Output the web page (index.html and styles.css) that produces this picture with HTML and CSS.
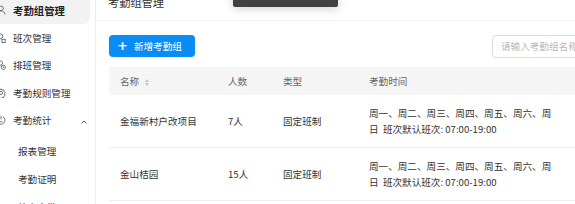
FILE: index.html
```html
<!DOCTYPE html>
<html lang="zh-CN">
<head>
<meta charset="utf-8">
<title>考勤组管理</title>
<link rel="stylesheet" href="styles.css">
</head>
<body>
<aside class="sidebar">
  <ul class="menu">
    <li class="item active">
      <svg class="icon" viewBox="0 0 10 10"><circle cx="5" cy="3.3" r="2.3"/><path d="M1 9.5c0-2.4 1.8-3.6 4-3.6s4 1.2 4 3.6"/></svg>
      <span>考勤组管理</span>
    </li>
    <li class="item">
      <svg class="icon" viewBox="0 0 10 10"><circle cx="4.5" cy="3.3" r="2.3"/><path d="M0.8 9.5c0-2.4 1.7-3.6 3.7-3.6"/><rect x="6" y="6.3" width="3.2" height="3.2"/></svg>
      <span>班次管理</span>
    </li>
    <li class="item">
      <svg class="icon" viewBox="0 0 10 10"><circle cx="4.3" cy="3" r="2.2"/><path d="M0.8 9.3c0-2.2 1.5-3.4 3.5-3.4"/><circle cx="7.3" cy="7.3" r="2.1"/><path d="M7.3 6.3v1.1h0.9"/></svg>
      <span>排班管理</span>
    </li>
    <li class="item">
      <svg class="icon" viewBox="0 0 10 10"><circle cx="5" cy="5" r="1.6"/><path d="M5 0.8l1 1.3 1.6-.3.3 1.6 1.3 1-.8 1.4.8 1.4-1.3 1-.3 1.6-1.6-.3-1 1.3-1-1.3-1.6.3-.3-1.6-1.3-1 .8-1.4-.8-1.4 1.3-1 .3-1.6 1.6.3z"/></svg>
      <span>考勤规则管理</span>
    </li>
    <li class="item open">
      <svg class="icon" viewBox="0 0 10 10"><path d="M3 1.8a4 4 0 1 0 4 0"/><path d="M5 0.8v3.6"/><path d="M3.3 6.8h3.4"/></svg>
      <span>考勤统计</span>
      <svg class="arrow" viewBox="0 0 6 4"><path d="M0.7 3.3L3 1l2.3 2.3"/></svg>
    </li>
    <li class="sub">
      <ul class="submenu">
        <li class="subitem">报表管理</li>
        <li class="subitem">考勤证明</li>
        <li class="subitem">补卡审批</li>
      </ul>
    </li>
  </ul>
</aside>
<main class="main">
  <div class="toast"></div>
  <header class="header"><h1 class="title">考勤组管理</h1></header>
  <section class="content">
    <div class="toolbar">
      <button class="btn-primary"><span class="plus">+</span>新增考勤组</button>
      <div class="search">请输入考勤组名称</div>
    </div>
    <div class="table">
      <div class="row head">
        <div class="cell c1">名称<span class="sorter"><i class="up"></i><i class="down"></i></span></div>
        <div class="cell c2">人数</div>
        <div class="cell c3">类型</div>
        <div class="cell c4">考勤时间</div>
      </div>
      <div class="row">
        <div class="cell c1">金福新村户改项目</div>
        <div class="cell c2">7人</div>
        <div class="cell c3">固定班制</div>
        <div class="cell c4">周一、周二、周三、周四、周五、周六、周日&nbsp;&nbsp;班次默认班次: 07:00-19:00</div>
      </div>
      <div class="row">
        <div class="cell c1">金山桔园</div>
        <div class="cell c2">15人</div>
        <div class="cell c3">固定班制</div>
        <div class="cell c4">周一、周二、周三、周四、周五、周六、周日&nbsp;&nbsp;班次默认班次: 07:00-19:00</div>
      </div>
    </div>
  </section>
</main>
</body>
</html>
```

FILE: styles.css
```css
* { box-sizing: border-box; }
html, body { margin: 0; padding: 0; }
body {
  width: 575px;
  height: 204px;
  overflow: hidden;
  display: flex;
  background: #fff;
  font-family: "Noto Sans CJK SC", "Noto Sans", sans-serif;
  font-size: 9.6px;
  color: #333;
}
.sidebar {
  width: 96px;
  flex-shrink: 0;
  border-right: 1px solid #eeeeee;
  height: 100%;
}
.menu, .submenu { list-style: none; margin: 0; padding: 0; }
.menu { margin-top: -4px; }
.item {
  height: 27.5px;
  display: flex;
  align-items: center;
  gap: 7px;
  color: #333;
  margin-right: 5px;
}
.item .icon {
  width: 10px;
  height: 10px;
  margin-left: -4px;
  fill: none;
  stroke: #666;
  stroke-width: 0.9;
  flex-shrink: 0;
}
.item.active {
  background: #f2f2f2;
  border-radius: 0 6px 6px 0;
  font-weight: 700;
  font-size: 10.4px;
  height: 28px;
  color: #222;
}
.arrow {
  width: 6px;
  height: 4px;
  margin-left: auto;
  margin-right: 3px;
  margin-top: 3px;
  fill: none;
  stroke: #555;
  stroke-width: 1;
}
.submenu { padding-top: 3px; }
.subitem {
  height: 28px;
  display: flex;
  align-items: center;
  padding-left: 18px;
  color: #333;
}
.main {
  flex: 1;
  position: relative;
  overflow: hidden;
  height: 100%;
}
.toast {
  position: absolute;
  left: 137px;
  top: -10px;
  width: 105px;
  height: 17px;
  background: #414141;
  border-radius: 2px;
  box-shadow: 0 2px 10px rgba(0,0,0,0.18);
  z-index: 2;
}
.header {
  display: flex;
  align-items: flex-start;
  height: 21px;
  border-bottom: 1px solid #f3f3f3;
  padding-left: 12px;
}
.title {
  margin: -5px 0 0 0;
  font-size: 11.2px;
  line-height: 14px;
  font-weight: 400;
  color: #333;
}
.content {
  padding: 14px 0 0 13px;
  width: 600px;
}
.toolbar {
  display: flex;
  align-items: center;
  height: 22px;
  gap: 297px;
}
.btn-primary {
  width: 86px;
  height: 22px;
  border: none;
  border-radius: 4px;
  background: #0a8cf5;
  color: #fff;
  font-family: inherit;
  font-size: 9.6px;
  display: flex;
  align-items: center;
  padding: 0 0 0 8px;
  gap: 6px;
}
.plus {
  font-size: 13px;
  line-height: 1;
  font-weight: 700;
  font-family: "DejaVu Sans", sans-serif;
  margin-top: -1px;
}
.search {
  width: 180px;
  height: 23px;
  border: 1px solid #dcdcdc;
  border-radius: 4px;
  color: #b8b8b8;
  display: flex;
  align-items: center;
  padding-left: 8px;
  flex-shrink: 0;
}
.table { margin-top: 10px; }
.row {
  display: grid;
  grid-template-columns: 108px 55px 86px 210px 120px;
  min-height: 53px;
  align-items: center;
  border-bottom: 1px solid #f0f0f0;
}
.row.head {
  min-height: 28px;
  background: #f5f5f5;
  color: #666;
  border-bottom: none;
}
.cell { padding-left: 11px; }
.c4 { padding-right: 13px; line-height: 16px; }
.sorter {
  display: inline-flex;
  flex-direction: column;
  gap: 1px;
  margin-left: 6px;
  vertical-align: middle;
}
.sorter i {
  width: 0;
  height: 0;
  border-left: 2.5px solid transparent;
  border-right: 2.5px solid transparent;
}
.sorter .up { border-bottom: 3px solid #c4c4c4; }
.sorter .down { border-top: 3px solid #c4c4c4; }
```
